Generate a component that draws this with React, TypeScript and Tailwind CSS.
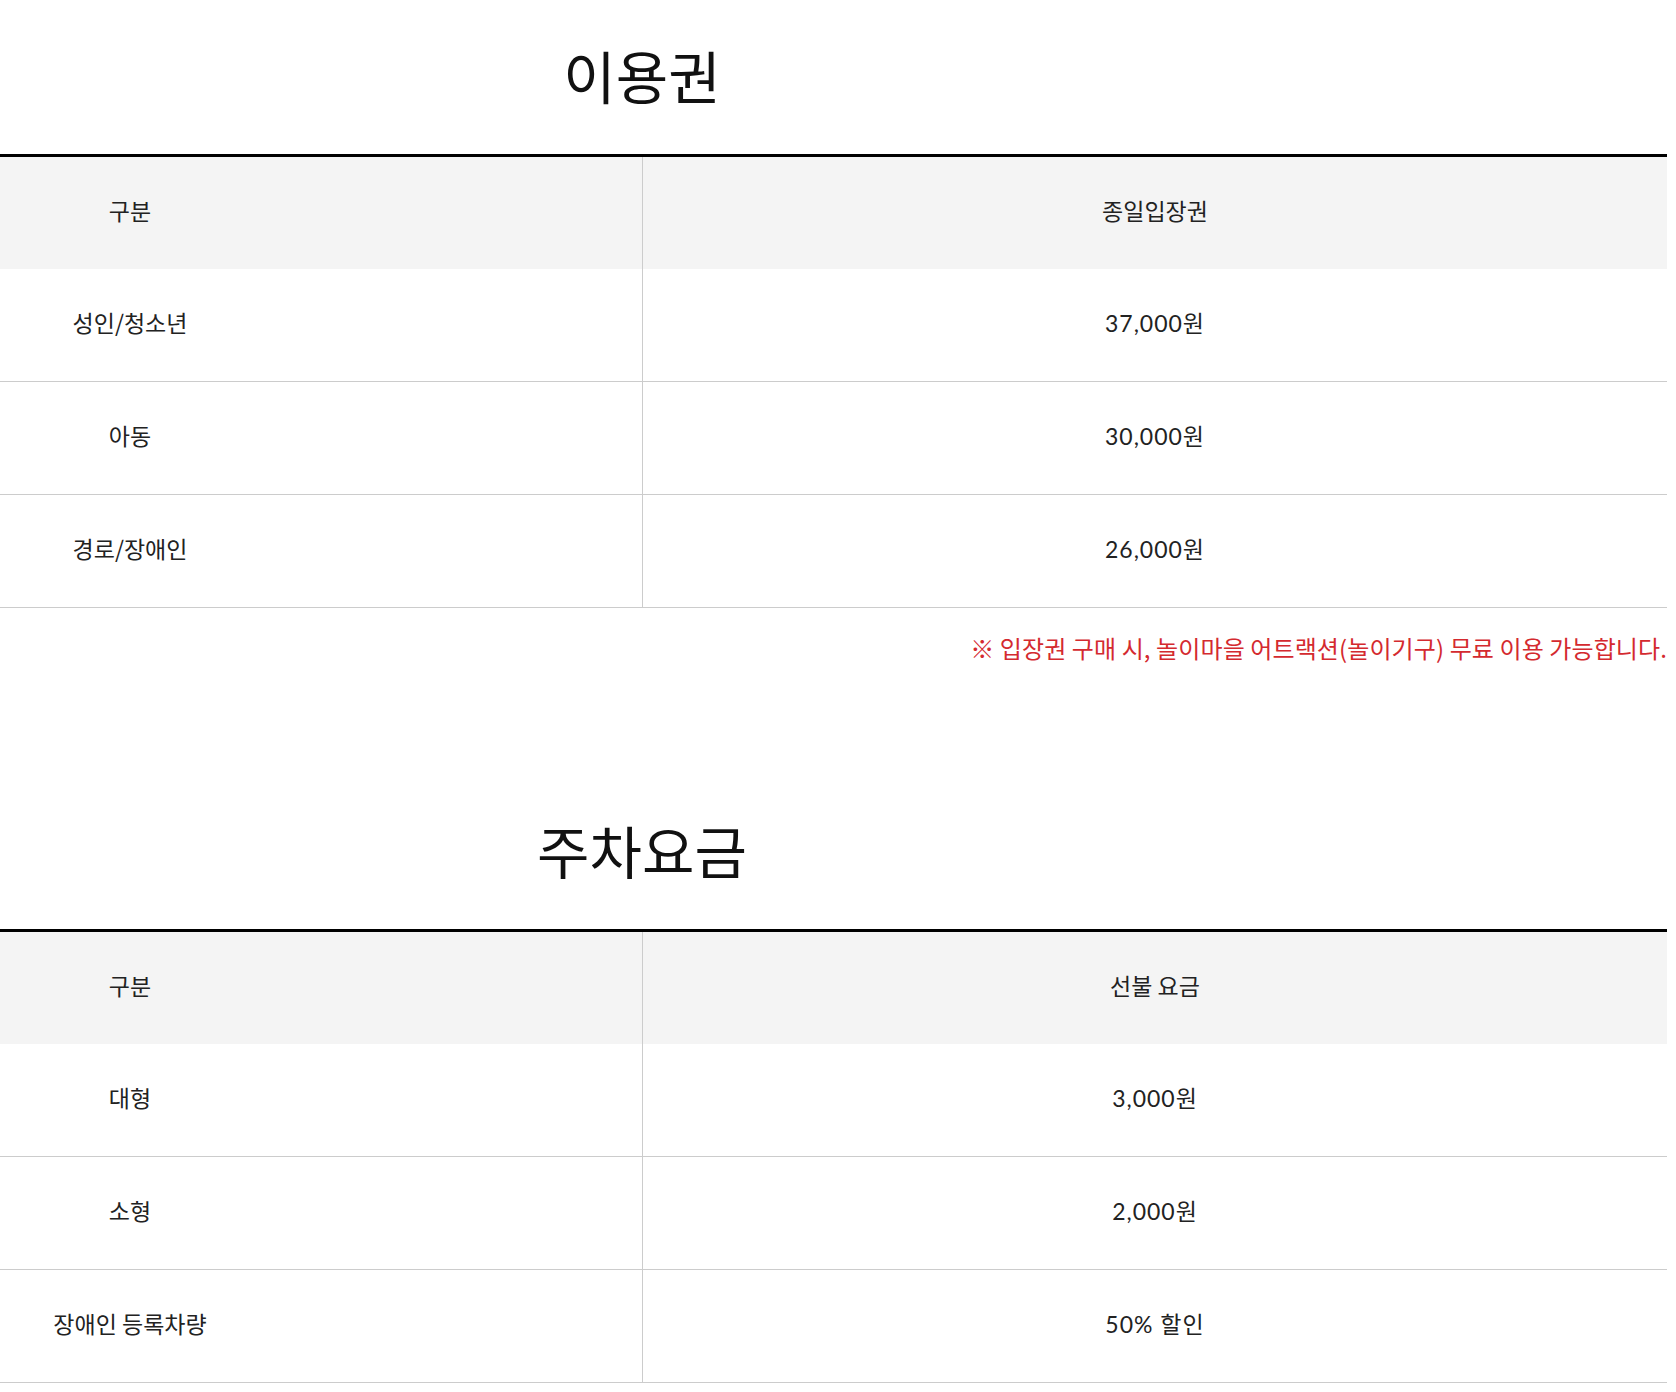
const tickets = [
  { label: "성인/청소년", value: "37,000원" },
  { label: "아동", value: "30,000원" },
  { label: "경로/장애인", value: "26,000원" },
];

const parking = [
  { label: "대형", value: "3,000원" },
  { label: "소형", value: "2,000원" },
  { label: "장애인 등록차량", value: "50% 할인" },
];

type Row = { label: string; value: string };

const PriceTable = ({ title, head, rows }: { title: string; head: string; rows: Row[] }) => {
  return (
    <section>
      {/* Title */}
      <div className="w-[1284px] h-[154px] flex items-center justify-center pb-[6px]">
        <h2 className="text-[57px] leading-none text-[#111] font-normal">{title}</h2>
      </div>

      {/* Table */}
      <div className="w-[1667px] border-t-[3px] border-black">
        <div className="flex h-[112px] bg-[#f4f4f4]">
          <div className="w-[642px] flex items-center pb-[6px]">
            <span className="w-[260px] text-center">구분</span>
          </div>
          <div className="w-px bg-[#cccccc]" />
          <div className="flex-1 flex items-center justify-center pb-[6px]">{head}</div>
        </div>
        {rows.map((row) => (
          <div key={row.label} className="flex h-[113px] border-b border-[#cccccc]">
            <div className="w-[642px] flex items-center pb-[6px]">
              <span className="w-[260px] text-center">{row.label}</span>
            </div>
            <div className="w-px bg-[#cccccc]" />
            <div className="flex-1 flex items-center justify-center pb-[4px] tracking-[1px] text-[#222] font-normal font-['Lato','Noto_Sans_CJK_KR',sans-serif]">
              {row.value}
            </div>
          </div>
        ))}
      </div>
    </section>
  );
};

const App = () => {
  return (
    <div className="min-h-screen bg-white text-[#222] text-[23px] font-['Noto_Sans_CJK_KR','Noto_Sans',sans-serif]">
      <PriceTable title="이용권" head="종일입장권" rows={tickets} />

      <div className="w-[1667px] h-[167px] pt-[26px]">
        <p className="text-right text-[24px] leading-[28px] text-[#d42a2f] tracking-[0.1px]">
          ※ 입장권 구매 시, 놀이마을 어트랙션(놀이기구) 무료 이용 가능합니다.
        </p>
      </div>

      <PriceTable title="주차요금" head="선불 요금" rows={parking} />
    </div>
  );
};

export default App;
